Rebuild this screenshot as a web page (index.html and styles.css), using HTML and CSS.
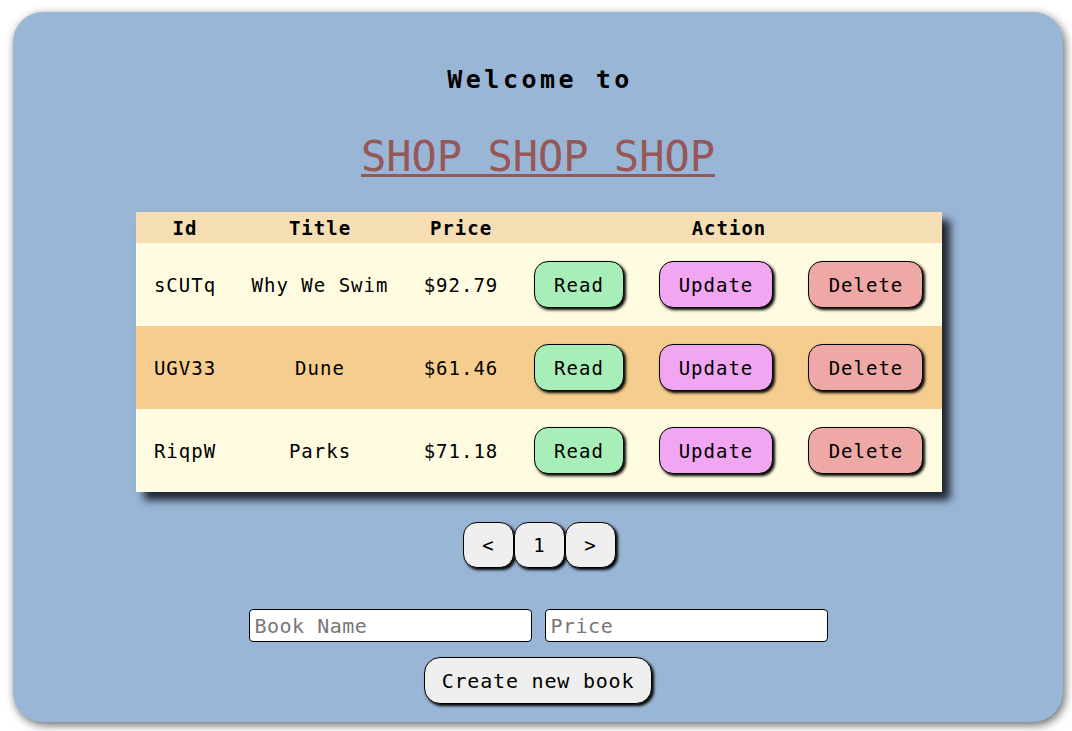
FILE: index.html
```html
<!DOCTYPE html>
<html>
<head>
<meta charset="utf-8">
<link rel="stylesheet" href="styles.css">
</head>
<body>
<div class="card">
  <h2 class="welcome">Welcome to</h2>
  <h1 class="brand">SHOP SHOP SHOP</h1>
  <table class="books">
    <colgroup>
      <col class="c-id"><col class="c-title"><col class="c-price"><col class="c-read"><col class="c-update"><col class="c-delete">
    </colgroup>
    <thead>
      <tr><th>Id</th><th>Title</th><th>Price</th><th colspan="3">Action</th></tr>
    </thead>
    <tbody>
      <tr class="odd">
        <td>sCUTq</td><td>Why We Swim</td><td>$92.79</td>
        <td><button class="btn read">Read</button></td>
        <td><button class="btn update">Update</button></td>
        <td><button class="btn delete">Delete</button></td>
      </tr>
      <tr class="even">
        <td>UGV33</td><td>Dune</td><td>$61.46</td>
        <td><button class="btn read">Read</button></td>
        <td><button class="btn update">Update</button></td>
        <td><button class="btn delete">Delete</button></td>
      </tr>
      <tr class="odd">
        <td>RiqpW</td><td>Parks</td><td>$71.18</td>
        <td><button class="btn read">Read</button></td>
        <td><button class="btn update">Update</button></td>
        <td><button class="btn delete">Delete</button></td>
      </tr>
    </tbody>
  </table>
  <div class="pager">
    <button class="page-btn">&lt;</button>
    <button class="page-btn">1</button>
    <button class="page-btn">&gt;</button>
  </div>
  <div class="form-row">
    <input class="field" type="text" placeholder="Book Name">
    <input class="field" type="text" placeholder="Price">
  </div>
  <button class="create-btn">Create new book</button>
</div>
</body>
</html>
```
FILE: styles.css
```css
html, body {
  margin: 0;
  padding: 0;
  background: #ffffff;
}
body {
  font-family: "DejaVu Sans Mono", monospace;
  padding: 12px 9px 9px 13px;
}
.card {
  box-sizing: border-box;
  width: 1050px;
  height: 710px;
  background: #9ab6d6;
  border-radius: 30px;
  box-shadow: 2px 3px 10px rgba(0, 0, 0, 0.6);
  padding-top: 53px;
  display: flex;
  flex-direction: column;
  align-items: center;
}
.welcome {
  margin: 0;
  font-size: 25px;
  line-height: 30px;
  font-weight: bold;
  letter-spacing: 3.5px;
  color: #000;
  padding-left: 4px;
}
.brand {
  margin: 37px 0 0;
  font-size: 42px;
  line-height: 50px;
  font-weight: normal;
  color: #965757;
  text-decoration: underline;
  text-decoration-thickness: 3px;
  text-underline-offset: 3px;
}
.books {
  margin-top: 30px;
  margin-left: 2px;
  width: 806px;
  table-layout: fixed;
  border-collapse: collapse;
  box-shadow: 8px 8px 8px #1e2530;
  font-size: 19px;
  letter-spacing: 1px;
}
.c-id { width: 98px; }
.c-title { width: 172px; }
.c-price { width: 110px; }
.c-read { width: 126px; }
.c-update { width: 148px; }
.c-delete { width: 152px; }
.books th {
  background: #f5deb3;
  height: 31px;
  padding: 0;
  font-weight: bold;
  text-align: center;
  vertical-align: middle;
}
.books td {
  height: 83px;
  padding: 0;
  text-align: center;
  vertical-align: middle;
  white-space: nowrap;
}
.books tr.odd td { background: #fefbe0; }
.books tr.even td { background: #f5ce8f; }
.btn {
  font-family: "DejaVu Sans Mono", monospace;
  font-size: 19px;
  letter-spacing: 1px;
  height: 47px;
  padding: 0 16px;
  border: 1px solid #000;
  border-radius: 14px;
  box-shadow: 2px 2px 3px #000;
  color: #000;
  cursor: pointer;
}
.btn.read { background: #a8eeb8; width: 90px; }
.btn.update { background: #f0a6f0; width: 114px; }
.btn.delete { background: #eea8a5; width: 115px; }
.pager {
  margin-top: 30px;
  display: flex;
  padding-left: 2px;
}
.page-btn {
  font-family: "DejaVu Sans Mono", monospace;
  font-size: 19px;
  width: 51px;
  height: 46px;
  padding: 0;
  background: #efefef;
  border: 1px solid #000;
  border-radius: 14px;
  box-shadow: 2px 2px 3px #000;
  color: #000;
}
.form-row {
  margin-top: 41px;
  display: flex;
  gap: 13px;
}
.field {
  box-sizing: border-box;
  width: 283px;
  height: 33px;
  border: 1px solid #000;
  border-radius: 4px;
  background: #fff;
  padding: 0 5px;
  font-family: "DejaVu Sans Mono", monospace;
  font-size: 20px;
  letter-spacing: 0.5px;
}
.field::placeholder { color: #777; }
.create-btn {
  margin-top: 15px;
  font-family: "DejaVu Sans Mono", monospace;
  font-size: 20px;
  letter-spacing: 0.8px;
  width: 228px;
  height: 47px;
  padding: 0;
  background: #efefef;
  border: 1px solid #000;
  border-radius: 16px;
  box-shadow: 2px 2px 3px #000;
  color: #000;
}
```
